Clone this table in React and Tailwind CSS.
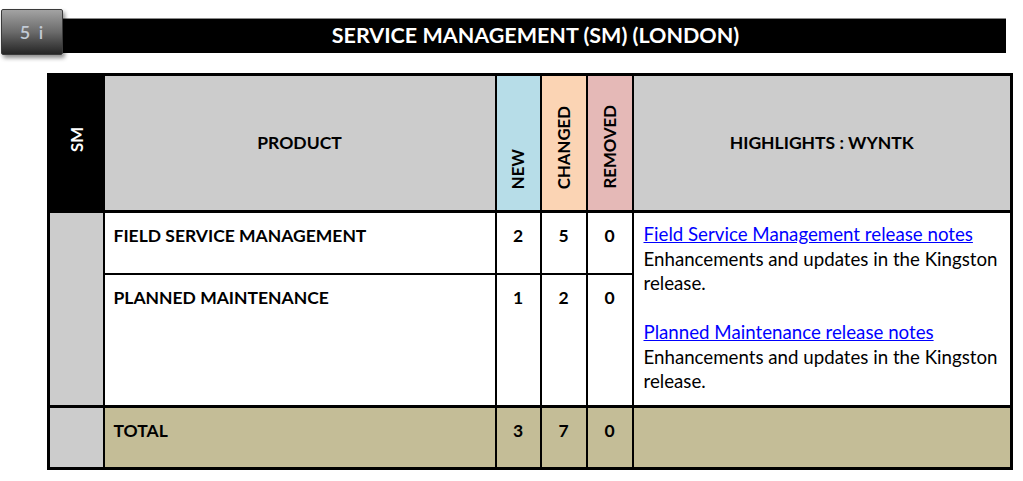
const rows = [
  { name: 'FIELD SERVICE MANAGEMENT', n: 2, c: 5, r: 0 },
  { name: 'PLANNED MAINTENANCE', n: 1, c: 2, r: 0 },
];

function VerticalLabel({ children, className = '' }) {
  return (
    <span className={`inline-block [writing-mode:vertical-rl] rotate-180 font-bold text-[16.8px] ${className}`}>
      {children}
    </span>
  );
}

export default function App() {
  return (
    <div className="w-[1023px] h-[481px] bg-white text-black overflow-hidden font-['Lato',sans-serif]">
      {/* section bar */}
      <div className="flex items-start pl-[1px] pt-[9px] pr-[17px]">
        <div className="relative z-10 w-[62px] h-[46px] flex items-center justify-center rounded-[2px] border border-[#3a3a3a] bg-gradient-to-b from-[#a3a3a3] via-[#6b6b6b] to-[#262626] shadow-[2px_3px_4px_rgba(0,0,0,0.45)]">
          <span className="text-[18px] font-semibold tracking-[2px] text-[#c3cbd6] pl-[1px]">5 i</span>
        </div>
        <div className="flex-1 mt-[9px] h-[35px] bg-black border-t border-[#8a8a8a] flex items-center justify-center pl-[2px]">
          <h1 className="text-[21.5px] font-bold text-white leading-none">SERVICE MANAGEMENT (SM) (LONDON)</h1>
        </div>
      </div>

      {/* overview table */}
      <div className="mt-[18px] ml-[47px] w-[966px]">
        <table className="w-full border-collapse border-[3px] border-black table-fixed text-[17.5px]">
          <colgroup>
            <col className="w-[55px]" />
            <col className="w-[392px]" />
            <col className="w-[45px]" />
            <col className="w-[46px]" />
            <col className="w-[46px]" />
            <col />
          </colgroup>
          <thead>
            <tr className="h-[137px] border-b-[3px] border-black">
              <th className="bg-black text-white align-middle p-0">
                <VerticalLabel>SM</VerticalLabel>
              </th>
              <th className="bg-[#cccccc] border-2 border-black font-bold align-middle">PRODUCT</th>
              <th className="bg-[#b7dde8] border-2 border-black align-bottom p-0 pb-[14px]">
                <VerticalLabel>NEW</VerticalLabel>
              </th>
              <th className="bg-[#fbd4b4] border-2 border-black align-bottom p-0 pb-[14px]">
                <VerticalLabel>CHANGED</VerticalLabel>
              </th>
              <th className="bg-[#e5b9b7] border-2 border-black align-bottom p-0 pb-[14px]">
                <VerticalLabel>REMOVED</VerticalLabel>
              </th>
              <th className="bg-[#cccccc] border-2 border-black font-bold align-middle">HIGHLIGHTS : WYNTK</th>
            </tr>
          </thead>
          <tbody>
            {rows.map((row, i) => (
              <tr key={row.name} className={i === 0 ? 'h-[62px]' : 'h-[133px]'}>
                {i === 0 && <td rowSpan={2} className="bg-[#cccccc] border-2 border-black" />}
                <td className="border-2 border-black align-top pl-[9px] pt-[10px] font-bold">{row.name}</td>
                <td className="border-2 border-black align-top text-center pt-[10px] font-bold">{row.n}</td>
                <td className="border-2 border-black align-top text-center pt-[10px] font-bold">{row.c}</td>
                <td className="border-2 border-black align-top text-center pt-[10px] font-bold">{row.r}</td>
                {i === 0 && (
                  <td rowSpan={2} className="border-2 border-black align-top pl-[10px] pt-[9px] text-[18.7px] leading-[24.5px]">
                    <a className="text-[#0000ff] underline">Field Service Management release notes</a>
                    <div>Enhancements and updates in the Kingston release.</div>
                    <div className="h-[24.5px]" />
                    <a className="text-[#0000ff] underline">Planned Maintenance release notes</a>
                    <div>Enhancements and updates in the Kingston release.</div>
                  </td>
                )}
              </tr>
            ))}
            <tr className="h-[62px] border-t-[3px] border-black">
              <td className="bg-[#cccccc] border-2 border-black" />
              <td className="bg-[#c4bd97] border-2 border-black align-top pl-[9px] pt-[10px] font-bold">TOTAL</td>
              <td className="bg-[#c4bd97] border-2 border-black align-top text-center pt-[10px] font-bold">3</td>
              <td className="bg-[#c4bd97] border-2 border-black align-top text-center pt-[10px] font-bold">7</td>
              <td className="bg-[#c4bd97] border-2 border-black align-top text-center pt-[10px] font-bold">0</td>
              <td className="bg-[#c4bd97] border-2 border-black" />
            </tr>
          </tbody>
        </table>
      </div>
    </div>
  );
}
